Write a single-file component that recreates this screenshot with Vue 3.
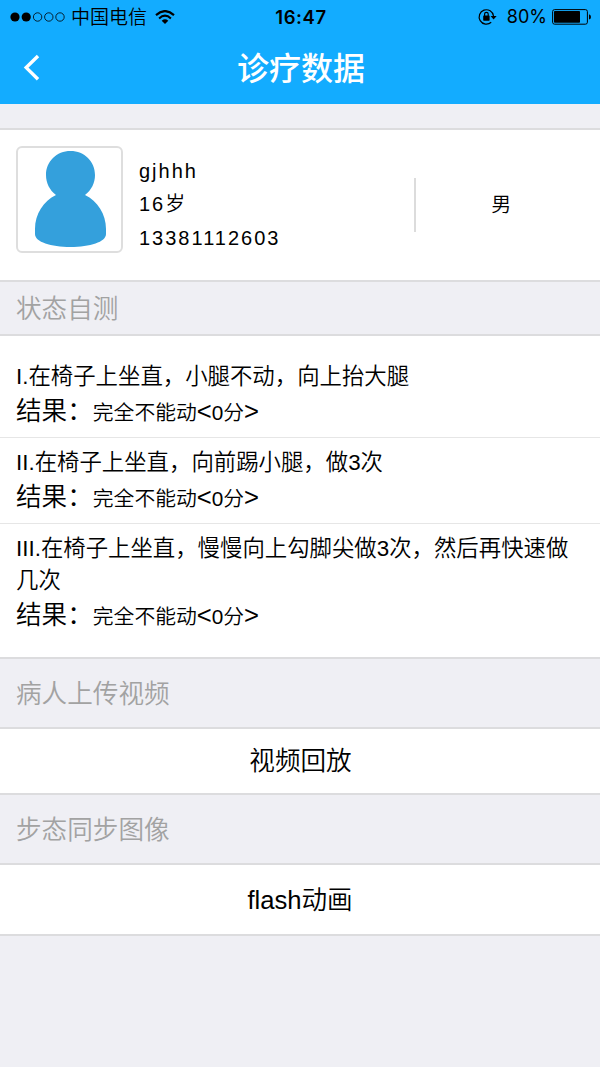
<script setup>
const patient = { name: 'gjhhh', age: '16岁', phone: '13381112603', gender: '男' }
const tests = [
  { title: 'I.在椅子上坐直，小腿不动，向上抬大腿', answer: '完全不能动', score: '0分' },
  { title: 'II.在椅子上坐直，向前踢小腿，做3次', answer: '完全不能动', score: '0分' },
  { title: 'III.在椅子上坐直，慢慢向上勾脚尖做3次，然后再快速做几次', answer: '完全不能动', score: '0分' },
]
</script>

<template>
  <div class="page">
    <header class="header">
      <div class="status">
        <div class="status-left">
          <svg class="dots" width="56" height="12" viewBox="0 0 56 12">
            <circle cx="5" cy="6" r="4.6" />
            <circle cx="16.2" cy="6" r="4.6" />
            <g fill="none" stroke="#000" stroke-width="0.8">
              <circle cx="27.6" cy="6" r="4.2" />
              <circle cx="38.8" cy="6" r="4.2" />
              <circle cx="50" cy="6" r="4.2" />
            </g>
          </svg>
          <span class="carrier">中国电信</span>
          <svg class="wifi" width="20" height="15" viewBox="0 0 20 15">
            <g fill="none" stroke="#000" stroke-width="2.1">
              <path d="M1 5.1Q10-3 19 5.1" />
              <path d="M4.1 8.4Q10 3 15.9 8.4" />
            </g>
            <path d="M6.7 10.7Q10 8 13.3 10.7L10 14Z" />
          </svg>
        </div>
        <span class="clock">16:47</span>
        <div class="status-right">
          <svg width="20" height="18" viewBox="0 0 20 18">
            <path d="M14.2 14.3A7.2 7.2 0 1 1 16.5 8" fill="none" stroke="#000" stroke-width="1.2" />
            <path d="M13.6 8H19.6L16.6 11.6Z" />
            <rect x="6.2" y="7.5" width="6.4" height="5.2" rx="0.6" />
            <path d="M7.6 8V6.1a1.8 1.8 0 0 1 3.6 0V8" fill="none" stroke="#000" stroke-width="1.2" />
          </svg>
          <span class="percent">80%</span>
          <svg class="battery" width="40" height="16" viewBox="0 0 40 16">
            <rect x="0.6" y="0.6" width="34.8" height="14.6" rx="2" fill="none" stroke="#000" stroke-width="1" />
            <rect x="2" y="2" width="26" height="11.8" rx="0.8" />
            <path d="M37 5.2Q39 6 39 8T37 10.6Z" />
          </svg>
        </div>
      </div>
      <div class="nav">
        <svg class="back" width="18" height="28" viewBox="0 0 18 28">
          <path d="M16 2L4.2 13.6L16 25.2" fill="none" stroke="#fff" stroke-width="3.4" />
        </svg>
        <h1>诊疗数据</h1>
      </div>
    </header>

    <section class="profile">
      <div class="avatar">
        <svg width="104" height="104" viewBox="0 0 104 104">
          <path
            fill="#34a0dc"
            d="M53.5 4C67.5 4 78 14.5 78 28C78 36 74.5 43 68 48C80.5 54 89 67 89 82V87C89 95 73 100 53.5 100S18 95 18 87V82C18 67 26.5 54 39 48C32.5 43 29 36 29 28C29 14.5 39.5 4 53.5 4Z"
          />
        </svg>
      </div>
      <div class="info">
        <span>{{ patient.name }}</span>
        <span>{{ patient.age }}</span>
        <span>{{ patient.phone }}</span>
      </div>
      <div class="divider"></div>
      <div class="gender">{{ patient.gender }}</div>
    </section>

    <h2 class="caption compact">状态自测</h2>
    <section class="tests">
      <article v-for="test in tests" :key="test.title" class="test">
        <p class="question">{{ test.title }}</p>
        <p class="result">结果：<span>{{ test.answer }}</span>&lt;<span>{{ test.score }}</span>&gt;</p>
      </article>
    </section>

    <h2 class="caption">病人上传视频</h2>
    <div class="action replay">视频回放</div>
    <h2 class="caption">步态同步图像</h2>
    <div class="action flash">flash动画</div>
  </div>
</template>

<style>
body {
  background: #efeff4;
}
</style>

<style scoped>
.page {
  height: 1067px;
  overflow: hidden;
  background: #efeff4;
  color: #000;
  font-family: "Liberation Sans", "Noto Sans CJK SC DemiLight", "Noto Sans CJK SC", sans-serif;
  font-weight: 350;
}
.page * {
  box-sizing: border-box;
}
.header {
  height: 104px;
  background: #13acff;
}
.status {
  display: grid;
  grid-template-columns: 1fr auto 1fr;
  align-items: center;
  height: 32px;
  padding: 1px 8px 0 10px;
  font-size: 19px;
  line-height: 32px;
}
.status-left,
.status-right {
  display: flex;
  align-items: center;
}
.status-right {
  justify-content: flex-end;
}
.carrier {
  margin-left: 5px;
  padding-top: 1px;
  line-height: 30px;
}
.wifi {
  margin-left: 8px;
}
.clock {
  font-family: Inter, "Liberation Sans", sans-serif;
  font-weight: 600;
  font-size: 18.5px;
  letter-spacing: 0.6px;
}
.percent {
  margin: 0 5px 0 10px;
  font-family: Inter, "Liberation Sans", sans-serif;
  font-size: 18px;
  font-weight: 400;
}
.nav {
  display: grid;
  grid-template-columns: 40px 1fr 40px;
  align-items: center;
  height: 72px;
  padding: 0 20px 0 22px;
}
h1 {
  margin: 0;
  padding-bottom: 4px;
  color: #fff;
  font-family: "Noto Sans CJK SC", sans-serif;
  font-size: 32px;
  line-height: 68px;
  font-weight: 500;
  text-align: center;
}
.profile {
  display: flex;
  align-items: flex-start;
  height: 152px;
  margin-top: 24px;
  padding: 16px 0 0 16px;
  border-top: 2px solid #dcdcde;
  background: #fff;
}
.avatar {
  width: 107px;
  height: 107px;
  border: 2px solid #dedede;
  border-radius: 6px;
}
.avatar svg {
  display: block;
  margin: -1px 0 0 -1px;
}
.info {
  display: flex;
  flex-direction: column;
  width: 291px;
  padding: 9px 0 0 16px;
  font-size: 20px;
  line-height: 33.4px;
  letter-spacing: 2px;
}
.divider {
  width: 2px;
  height: 54px;
  margin-top: 32px;
  background: #dcdcdc;
}
.gender {
  flex: 1;
  padding-right: 12px;
  font-size: 20px;
  line-height: 118px;
  text-align: center;
  letter-spacing: 1.7px;
}
.caption {
  height: 70px;
  margin: 0;
  padding-left: 16px;
  border-top: 2px solid #dcdcde;
  color: #a2a2a2;
  font-size: 25.6px;
  line-height: 70px;
  font-weight: 350;
}
.compact {
  height: 54px;
  line-height: 54px;
}
.tests {
  height: 323px;
  padding-top: 25px;
  border-top: 2px solid #dcdcde;
  background: #fff;
}
.test {
  padding: 9px 16px 7px;
}
.test:first-child {
  padding-top: 0;
}
.test + .test {
  border-top: 1px solid #e6e6e6;
}
.question,
.result {
  margin: 0;
}
.question {
  font-size: 22.4px;
  line-height: 32px;
}
.result {
  height: 37px;
  font-size: 25.6px;
  line-height: 37px;
}
.result span {
  font-size: 20.8px;
}
.action {
  border-top: 2px solid #dcdcde;
  background: #fff;
  font-size: 25.6px;
  text-align: center;
}
.replay {
  height: 66px;
  padding-left: 1px;
  line-height: 64px;
}
.flash {
  height: 73px;
  border-bottom: 2px solid #dcdcde;
  line-height: 71px;
}
</style>
